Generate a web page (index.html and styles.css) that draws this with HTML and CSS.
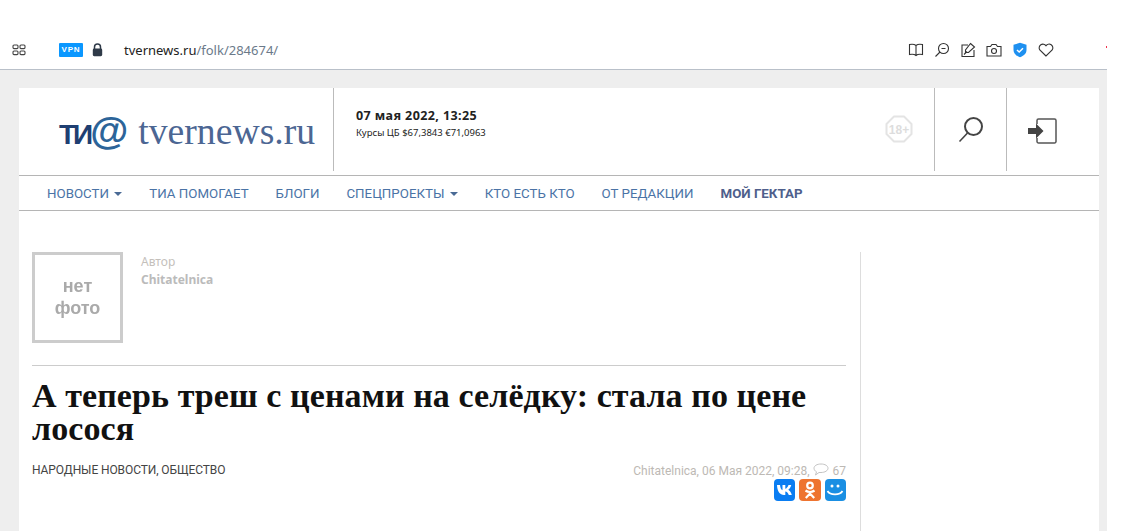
FILE: index.html
```html
<!DOCTYPE html>
<html lang="en">
<head>
  <meta charset="UTF-8" />
  <title>А теперь треш с ценами на селёдку</title>
  <link rel="stylesheet" href="styles.css">
</head>
<body>

  <div class="browser-bar">
    <svg class="ic-tabs" width="14" height="12" viewBox="0 0 14 12" fill="none" stroke="#444" stroke-width="1.1">
      <rect x="1" y="1" width="5" height="3.6" rx="1"/><rect x="8" y="1" width="5" height="3.6" rx="1"/>
      <rect x="1" y="7" width="5" height="3.6" rx="1"/><rect x="8" y="7" width="5" height="3.6" rx="1"/>
    </svg>
    <span class="vpn">VPN</span>
    <svg class="ic-lock" width="11" height="14" viewBox="0 0 11 14">
      <path d="M2.5 6V4a3 3 0 0 1 6 0v2" fill="none" stroke="#2f3a48" stroke-width="1.5"/>
      <rect x="0.8" y="5.6" width="9.4" height="7.6" rx="1.4" fill="#2f3a48"/>
    </svg>
    <span class="url">tvernews.ru<span class="url-path">/folk/284674/</span></span>
    <div class="bar-icons">
      <svg width="16" height="16" viewBox="0 0 16 16" fill="none" stroke="#333" stroke-width="1.1"><path d="M8 3.500C6.500 2.200 3 2.200 1.500 2.500v10c1.500-.3 5-.3 6.500 1 1.500-1.300 5-1.300 6.500-1v-10C13 2.200 9.500 2.200 8 3.500zM8 3.500v10"/></svg>
      <svg width="16" height="16" viewBox="0 0 16 16" fill="none" stroke="#333" stroke-width="1.1"><circle cx="9.500" cy="6.500" r="5"/><path d="M6 10 1.500 14.500M7.500 6.500h4"/></svg>
      <svg width="16" height="16" viewBox="0 0 16 16" fill="none" stroke="#333" stroke-width="1.1"><path d="M8 3H2v11.500h12V8"/><path d="M10.500 1.500 14.500 5 8.500 10.500H5.500V8z"/><path d="M4 12.500 7 9.500"/></svg>
      <svg width="16" height="16" viewBox="0 0 16 16" fill="none" stroke="#333" stroke-width="1.1"><path d="M1 4.500h3.500L6 2.500h4l1.500 2H15v9.500H1z"/><circle cx="8" cy="9" r="2.500"/></svg>
      <svg width="16" height="16" viewBox="0 0 16 16"><path d="M8 .8 14.500 2.800V8c0 3.500-3 6-6.500 7.300C4.500 14 1.500 11.500 1.500 8V2.800z" fill="#1e90f0"/><path d="M5 8l2.200 2L11 6.200" fill="none" stroke="#fff" stroke-width="1.500"/></svg>
      <svg width="16" height="16" viewBox="0 0 16 16" fill="none" stroke="#333" stroke-width="1.1"><path d="M8 14 1.800 8A3.700 3.700 0 0 1 8 3.800 3.700 3.700 0 0 1 14.200 8z"/></svg>
    </div>
    <span class="red-dot"></span>
  </div>

  <div class="page">
    <div class="site">
      <header class="top">
        <div class="logo">
          <span class="logo-tia">ТИ<span class="logo-at">@</span></span>
          <span class="logo-name">tvernews.ru</span>
        </div>
        <div class="info">
          <div class="date">07 мая 2022, 13:25</div>
          <div class="rates">Курсы ЦБ $67,3843 €71,0963</div>
        </div>
        <svg class="age" width="28" height="28" viewBox="0 0 28 28">
          <path d="M9 1.500h10L26.500 9v10L19 26.500H9L1.500 19V9z" fill="none" stroke="#e4e4e4" stroke-width="2" stroke-linejoin="round"/>
          <text x="14" y="19" text-anchor="middle" class="age-text">18+</text>
        </svg>
        <div class="top-btn">
          <svg width="28" height="28" viewBox="0 0 28 28" fill="none" stroke="#444">
            <circle cx="16.500" cy="10.500" r="8.500" stroke-width="2"/>
            <path d="M10.500 17 2.500 25.500" stroke-width="1.600"/>
          </svg>
        </div>
        <div class="top-btn top-btn-last">
          <svg class="ic-login" width="30" height="26" viewBox="0 0 30 26" fill="none">
            <path d="M10 6V2.500A1.500 1.500 0 0 1 11.500 1H27.500A1.500 1.500 0 0 1 29 2.500V23.500A1.500 1.500 0 0 1 27.500 25H11.500A1.500 1.500 0 0 1 10 23.500V20" stroke="#555" stroke-width="1.500"/>
            <path d="M1 10h8V5.500L16.500 13 9 20.500V16H1z" fill="#444"/>
          </svg>
        </div>
      </header>

      <nav class="nav">
        <a>НОВОСТИ <i class="caret"></i></a>
        <a>ТИА ПОМОГАЕТ</a>
        <a>БЛОГИ</a>
        <a>СПЕЦПРОЕКТЫ <i class="caret"></i></a>
        <a>КТО ЕСТЬ КТО</a>
        <a>ОТ РЕДАКЦИИ</a>
        <a class="nav-strong">МОЙ ГЕКТАР</a>
      </nav>

      <div class="content">
        <main class="article">
          <div class="author">
            <div class="no-photo"><span>нет<br>фото</span></div>
            <div class="author-text">
              <div>Автор</div>
              <div class="author-name">Chitatelnica</div>
            </div>
          </div>
          <h1>А теперь треш с ценами на селёдку: стала по цене лосося</h1>
          <div class="meta">
            <div class="cats">НАРОДНЫЕ НОВОСТИ, ОБЩЕСТВО</div>
            <div class="meta-right">
              <div class="byline">Chitatelnica, 06 Мая 2022, 09:28,
                <svg width="16" height="13" viewBox="0 0 16 13" fill="none" stroke="#c4c4c4"><path d="M8 1c4 0 7 1.800 7 4.200S12 9.500 8 9.500H6L2.500 12l1-3.200C2 8 1 6.800 1 5.200 1 2.800 4 1 8 1z"/></svg>
                <span class="count">67</span>
              </div>
              <div class="share">
                <span class="sh sh-vk"><svg width="18" height="12" viewBox="0 0 18 12"><path d="M1 1h3c.2 3 1.500 5 2.500 5.300V1h2.800v3.800C10.500 4.600 11.800 3 12.500 1h2.800c-.5 2.200-2 4-3 4.800 1.200.7 2.800 2.300 3.500 5.200h-3c-.6-2-2-3.300-3.500-3.500V11H8C4 11 1.200 7.500 1 1z" fill="#fff"/></svg></span>
                <span class="sh sh-ok"><svg width="12" height="18" viewBox="0 0 12 18" fill="none" stroke="#fff" stroke-width="2.200"><circle cx="6" cy="4.500" r="2.800"/><path d="M1.500 9.500c2.500 1.800 6.500 1.800 9 0M6 11v1.500M1.800 17 6 12.500 10.200 17"/></svg></span>
                <span class="sh sh-mm"><svg width="18" height="14" viewBox="0 0 18 14" fill="none" stroke="#fff"><circle cx="6" cy="3" r="1.500" fill="#fff" stroke="none"/><circle cx="12" cy="3" r="1.500" fill="#fff" stroke="none"/><path d="M1.500 8c2.500 4.500 12.500 4.500 15 0" stroke-width="1.700"/></svg></span>
              </div>
            </div>
          </div>
        </main>
        <aside class="side"></aside>
      </div>
    </div>
  </div>

</body>
</html>
```
FILE: styles.css
```css
html, body {
  margin: 0;
  height: 531px;
  overflow: hidden;
  background: #fff;
  font-family: "Noto Sans", Arial, sans-serif;
}
.browser-bar {
  width: 1107px;
  height: 70px;
  box-sizing: border-box;
  border-bottom: 1px solid #b9c0c9;
  padding: 31px 0 0 12px;
  display: flex;
  align-items: center;
  position: relative;
}
.vpn {
  margin-left: 33px;
  width: 24px;
  height: 14px;
  background: #0a97ff;
  border-radius: 1px;
  color: #fff;
  font: bold 8px/14px "Liberation Sans", sans-serif;
  letter-spacing: 0.8px;
  text-align: center;
}
.ic-lock {
  margin-left: 9px;
}
.url {
  margin-left: 21px;
  font: 13px "Noto Sans", sans-serif;
  color: #222;
}
.url-path {
  color: #6b7a8a;
}
.bar-icons {
  position: absolute;
  left: 908px;
  top: 42px;
  display: flex;
  align-items: center;
  gap: 10px;
}
.red-dot {
  position: absolute;
  left: 1106px;
  top: 46px;
  width: 1px;
  height: 2px;
  background: #f0304c;
}
.page {
  width: 1107px;
  height: 461px;
  box-sizing: border-box;
  background: #eee;
  padding: 18px 8px 0 19px;
}
.site {
  background: #fff;
  height: 100%;
}
.top {
  display: flex;
  height: 83px;
}
.logo {
  width: 315px;
  box-sizing: border-box;
  border-right: 1px solid #bbb;
  padding: 4px 0 0 40px;
  display: flex;
  align-items: baseline;
  gap: 10px;
}
.logo-tia {
  font: bold 28px "Liberation Sans", sans-serif;
  color: #1f3f72;
  letter-spacing: -3px;
  line-height: 78px;
}
.logo-at {
  color: #2c6499;
  font-size: 39px;
  letter-spacing: 0;
}
.logo-name {
  font: 37.700px "Liberation Serif", serif;
  color: #4c6693;
}
.info {
  flex: 1;
  padding: 19px 0 0 22px;
  color: #222;
}
.date {
  font-size: 12.500px;
  font-weight: bold;
  letter-spacing: 0.4px;
}
.rates {
  font-size: 9.500px;
  margin-top: 2px;
}
.age {
  margin: 27px 21px 0 0;
}
.age-text {
  font: bold 12px "Liberation Sans", sans-serif;
  fill: #ddd;
}
.top-btn {
  width: 72px;
  box-sizing: border-box;
  border-left: 1px solid #bbb;
  display: flex;
  align-items: center;
  justify-content: center;
}
.top-btn-last {
  width: 93px;
  padding-right: 22px;
}
.ic-login {
  margin-top: 2px;
}
.nav {
  margin-top: 4px;
  border-top: 1px solid #b5b5b5;
  border-bottom: 1px solid #b5b5b5;
  height: 33px;
  padding: 1px 0 0 28px;
  display: flex;
  align-items: center;
  gap: 27px;
  font: 13.300px Roboto, sans-serif;
  color: #4a73a6;
}
.nav-strong {
  font-weight: bold;
  color: #4f5f8c;
}
.caret {
  display: inline-block;
  margin-left: 2px;
  vertical-align: 2px;
  border-top: 4px solid #4a6a95;
  border-left: 4px solid transparent;
  border-right: 4px solid transparent;
}
.content {
  display: flex;
  padding: 41px 0 0 13px;
}
.article {
  width: 814px;
}
.side {
  width: 1px;
  height: 280px;
  margin-left: 14px;
  background: #ddd;
}
.author {
  display: flex;
  gap: 18px;
  padding-bottom: 22px;
  border-bottom: 1px solid #ccc;
  font-size: 12px;
  color: #c4c0bb;
}
.no-photo {
  width: 91px;
  height: 91px;
  box-sizing: border-box;
  border: 3px solid #ccc;
  padding-bottom: 2px;
  display: flex;
  align-items: center;
  justify-content: center;
  text-align: center;
  color: #aaa;
  font: bold 18px/22px "Liberation Sans", sans-serif;
  filter: blur(0.7px);
}
.author-text {
  line-height: 18px;
  padding-top: 1px;
}
.author-name {
  font-weight: bold;
  color: #bbb;
}
h1 {
  margin: 13px 0 0;
  font: bold 34px/33px "Liberation Serif", serif;
  letter-spacing: 0.08px;
  color: #111;
}
.meta {
  display: flex;
  justify-content: space-between;
  margin-top: 18px;
  font: 12px Roboto, sans-serif;
}
.cats {
  color: #444;
  letter-spacing: -0.1px;
}
.meta-right {
  text-align: right;
  color: #bdb9b4;
}
.byline svg {
  vertical-align: -1px;
}
.count {
  margin-left: 1px;
}
.share {
  display: flex;
  justify-content: flex-end;
  gap: 4px;
  margin-top: 1px;
}
.sh {
  width: 21.330px;
  height: 22px;
  border-radius: 4px;
  display: flex;
  align-items: center;
  justify-content: center;
}
.sh-vk { background: #0a7df2; }
.sh-ok { background: #ee7430; }
.sh-mm { background: #1a8fe3; }
```
